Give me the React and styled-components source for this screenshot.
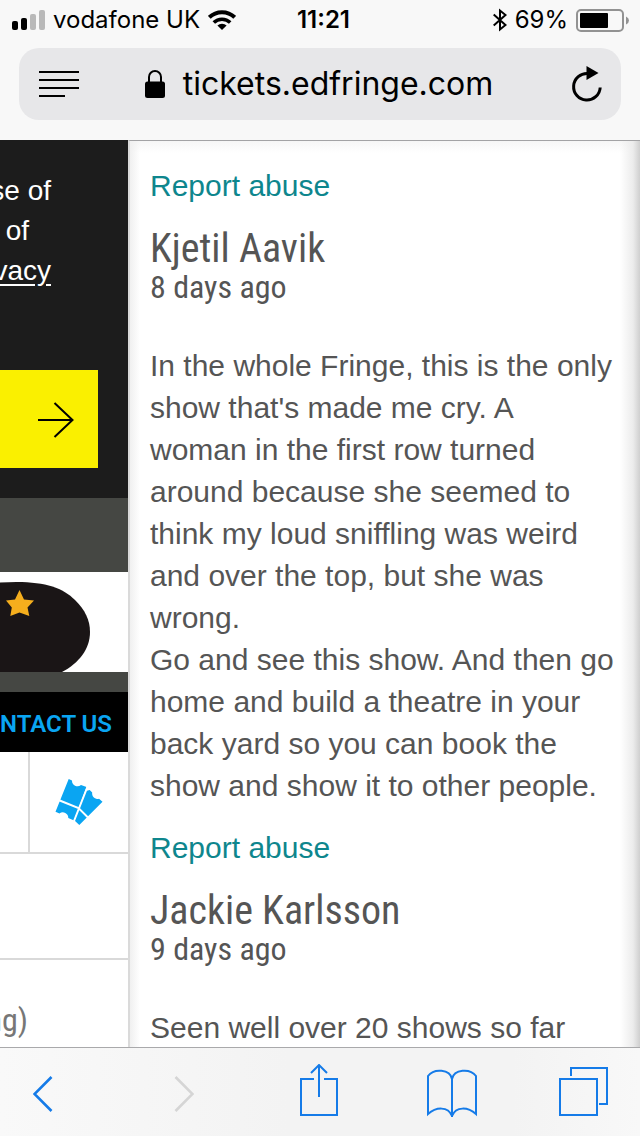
import React from "react";
import styled, { createGlobalStyle } from "styled-components";

const GlobalStyle = createGlobalStyle`
  * {
    box-sizing: border-box;
  }
  body {
    margin: 0;
    font-family: "Liberation Sans", Arial, sans-serif;
    background-color: white;
  }
  button {
    border: none;
    padding: 0;
    background: none;
    color: inherit;
    font: inherit;
    cursor: pointer;
  }
  svg {
    display: block;
  }
`;

const Screen = styled.div`
  height: 100vh;
  display: flex;
  flex-direction: column;
  overflow: hidden;
`;

/* browser top bar */
const Header = styled.header`
  background-color: #f8f8f8;
  font-family: Inter, "Liberation Sans", sans-serif;
  color: black;
`;
const StatusBar = styled.div`
  display: grid;
  grid-template-columns: 1fr auto 1fr;
  align-items: center;
  height: 40px;
  padding: 0 11px 0 12px;
  font-size: 24px;
  line-height: 40px;
`;
const StatusGroup = styled.div`
  display: flex;
  align-items: center;
  justify-content: ${(props) => (props.$end ? "flex-end" : "flex-start")};
  gap: 8px;
  white-space: nowrap;
`;
const Battery = styled.div`
  display: flex;
  align-items: center;
  gap: 8px;
`;
const Time = styled.time`
  padding-left: 6px;
  font-weight: 600;
`;
const AddressBar = styled.div`
  display: flex;
  align-items: center;
  justify-content: space-between;
  height: 72px;
  margin: 8px 19px 20px;
  padding: 0 18px 0 20px;
  border-radius: 20px;
  background-color: #e7e7e9;
`;
const Address = styled.button`
  display: flex;
  align-items: center;
  gap: 18px;
  padding-right: 12px;
  font-size: 32px;
  line-height: 40px;
`;

/* page */
const Page = styled.main`
  flex: 1;
  min-height: 0;
  display: flex;
  overflow: hidden;
`;
const Sidebar = styled.aside`
  flex: 0 0 20%;
  overflow: hidden;
  background-color: white;
`;
const Notice = styled.div`
  padding: 31px 0 30px;
  background-color: #1c1c1c;
  color: white;
  font-size: 28px;
  line-height: 40px;
`;
const NoticeText = styled.p`
  display: flex;
  flex-direction: column;
  align-items: flex-end;
  width: 51px;
  margin: 0 0 79px;
  white-space: nowrap;
`;
const NoticeLine = styled.span`
  padding-right: ${(props) => (props.$short ? "22px" : "0")};
`;
const NoticeLink = styled.a`
  color: white;
  text-underline-offset: 4px;
`;
const NextButton = styled.button`
  display: flex;
  align-items: center;
  justify-content: flex-end;
  width: 98px;
  height: 98px;
  padding-right: 24px;
  background-color: #faf000;
`;
const Sponsor = styled.div`
  padding: 74px 0 20px;
  background-color: #454743;
`;
const SponsorLogo = styled.div`
  height: 100px;
  background-color: white;
`;
const ContactBar = styled.nav`
  display: flex;
  justify-content: flex-end;
  height: 60px;
  padding-right: 16px;
  background-color: black;
  font-family: Roboto, sans-serif;
  font-size: 24px;
  font-weight: 600;
  line-height: 64px;
  white-space: nowrap;
`;
const ContactLink = styled.a`
  color: #0aa5f2;
  text-decoration: none;
`;
const IconRow = styled.div`
  display: flex;
  height: 102px;
  border-bottom: 2px solid #d9d9d9;
`;
const IconCell = styled.div`
  flex: ${(props) => (props.$grow ? "1" : "0 0 30px")};
  display: flex;
  align-items: center;
  justify-content: center;
  border-right: ${(props) => (props.$grow ? "none" : "2px solid #d9d9d9")};
`;
const EmptyRow = styled.div`
  height: 106px;
  border-bottom: 2px solid #d9d9d9;
`;
const SideRow = styled.div`
  display: flex;
  justify-content: flex-end;
  width: 28px;
  font-family: "Roboto Condensed", "Liberation Sans Narrow", sans-serif;
  font-size: 32px;
  line-height: 120px;
  color: #777;
`;

/* reviews */
const Reviews = styled.section`
  flex: 1;
  min-width: 0;
  padding: 24px 25px 0 20px;
  border-top: 1px solid #a3a3a5;
  border-left: 2px solid #dadada;
  background: linear-gradient(to right, #f0f0f0, rgba(255, 255, 255, 0) 10px),
    linear-gradient(to left, #cfcfcf, #ececec 7px, rgba(255, 255, 255, 0) 20px),
    linear-gradient(#f6f6f6, white 12px);
  color: #555;
`;
const ReportLink = styled.a`
  display: block;
  margin-bottom: 22px;
  color: #0e868d;
  font-size: 30px;
  line-height: 42px;
  text-decoration: none;
`;
const Author = styled.h3`
  margin: 0;
  font-family: "Roboto Condensed", "Liberation Sans Narrow", sans-serif;
  font-size: 40px;
  font-weight: 400;
  line-height: 40px;
`;
const Posted = styled.p`
  margin: 0 0 40px;
  font-family: "Roboto Condensed", "Liberation Sans Narrow", sans-serif;
  font-size: 32px;
  line-height: 36px;
`;
const ReviewText = styled.p`
  margin: 0 0 20px;
  font-size: 30px;
  line-height: 42px;
`;

/* browser bottom bar */
const Toolbar = styled.nav`
  display: grid;
  grid-template-columns: 141fr 126fr 127fr 132fr auto;
  align-items: center;
  justify-items: start;
  height: 89px;
  padding: 0 31px 0 33px;
  border-top: 1px solid #a9a9ab;
  background: linear-gradient(to right, #f9f9f9, #f3f3f3 45%, #f3f3f3 80%, #f8f8f8);
`;
const ToolButton = styled.button`
  color: ${(props) => (props.disabled ? "#d5d5d5" : "#157be8")};
`;

const SignalIcon = () => (
  <svg width="33" height="20" viewBox="0 0 33 20">
    <rect x="0" y="11" width="6" height="9" rx="2" />
    <rect x="9" y="8" width="6" height="12" rx="2" />
    <rect x="18" y="4" width="6" height="16" rx="2" fill="#b9b9b9" />
    <rect x="27" y="0" width="6" height="20" rx="2" fill="#b9b9b9" />
  </svg>
);

const WifiIcon = () => (
  <svg width="28" height="20" viewBox="0 0 28 20" fill="none" stroke="black" strokeWidth="4">
    <path d="M1.300 7.400a18 18 0 0 1 25.400 0" />
    <path d="M5.800 12.600a11.600 11.600 0 0 1 16.400 0" strokeWidth="3.500" />
    <path d="M14 20l-4.600-4.400a6.600 6.600 0 0 1 9.200 0z" fill="black" stroke="none" />
  </svg>
);

const BluetoothIcon = () => (
  <svg width="14" height="24" viewBox="0 0 14 24" fill="none" stroke="black" strokeWidth="2">
    <path d="M.7 6.500L12.500 17 7 21.500v-19L12.500 7 .7 17.500" />
  </svg>
);

const BatteryIcon = () => (
  <svg width="53" height="24" viewBox="0 0 53 24">
    <rect x="1" y="2" width="46" height="21" rx="4" fill="none" stroke="#929292" strokeWidth="2" />
    <rect x="4" y="5" width="28" height="15" rx="1" />
    <path d="M50 8.500q3 1.500 3 4t-3 4z" fill="#929292" />
  </svg>
);

const ReaderIcon = () => (
  <svg width="40" height="28" viewBox="0 0 40 28">
    <path d="M0 2h40M0 10h40M0 18h40M0 26h26" stroke="black" strokeWidth="2" />
  </svg>
);

const LockIcon = () => (
  <svg width="20" height="28" viewBox="0 0 20 28">
    <path d="M4 13V7a6 6 0 0 1 12 0v6" fill="none" stroke="black" strokeWidth="2" />
    <rect x="0" y="11.500" width="20" height="16.500" rx="2.500" />
  </svg>
);

const ReloadIcon = () => (
  <svg width="32" height="36" viewBox="0 0 32 36">
    <path d="M17 7.500A13.300 13.300 0 1 0 29.200 21.500" fill="none" stroke="black" strokeWidth="3" />
    <path d="M15.500 0v14L27.500 7z" />
  </svg>
);

const ArrowIcon = () => (
  <svg width="36" height="38" viewBox="0 0 36 38" fill="none" stroke="black" strokeWidth="2">
    <path d="M0 20h34M16.500 3L34.500 20 16.500 37" />
  </svg>
);

const LogoMark = () => (
  <svg width="128" height="100" viewBox="0 0 128 100">
    <path
      d="M0 10.500C40 8 61 14 75 28 85 38 90 48 90 60 90 77 79 91 62 100H0z"
      fill="#1a1516"
    />
    <path
      d="M19.500 18L24 27.500l10 1-6.500 7 1.800 8.500-9.800-3.500-9.200 3.500 1.500-8.500-5.800-7 9-1z"
      fill="#f5ae1d"
    />
  </svg>
);

const TicketsIcon = () => (
  <svg width="48" height="46" viewBox="0 0 48 46">
    <path
      d="M13.700 0l3.300 1.500A5.500 5.500 0 0 0 26 6l5.500 2L19 41.500 13.300 39A5.500 5.500 0 0 0 4.500 34.500L.5 32.800z"
      fill="#0aa5f2"
    />
    <path
      d="M34.700 11l2.500 2.500A5.500 5.500 0 0 0 44 19.800l3.500 3L24.300 46 19.500 41.500 31 12z"
      fill="#0aa5f2"
    />
    <path d="M33 6.500L19 42M3.500 21L23.500 29 33 38.500" fill="none" stroke="white" strokeWidth="2" />
  </svg>
);

const ChevronIcon = ({ flip }) => (
  <svg width="20" height="40" viewBox="0 0 20 40" fill="none" stroke="currentColor" strokeWidth="2.600">
    <path d={flip ? "M1.500 5L18.500 22 1.500 39" : "M18.500 5L1.500 22l17 17"} />
  </svg>
);

const ShareIcon = () => (
  <svg width="39" height="56" viewBox="0 0 39 56" fill="none" stroke="currentColor" strokeWidth="2">
    <path d="M14 15H1v36h36V15H24M19 33V1M11 9l8-8 8 8" />
  </svg>
);

const BookIcon = () => (
  <svg width="50" height="50" viewBox="0 0 50 50" fill="none" stroke="currentColor" strokeWidth="2">
    <path d="M25 50V12C23 2 7 1 1 9v38c8-7 20-8 24 2C29 39 41 40 49 47V9C43 1 27 2 25 12" />
  </svg>
);

const TabsIcon = () => (
  <svg width="50" height="50" viewBox="0 0 50 50" fill="none" stroke="currentColor" strokeWidth="2">
    <path d="M1 12h37v36H1zM12 9V1h36v36h-8" />
  </svg>
);

const reviews = [
  {
    author: "Kjetil Aavik",
    posted: "8 days ago",
    text: [
      "In the whole Fringe, this is the only show that's made me cry. A woman in the first row turned around because she seemed to think my loud sniffling was weird and over the top, but she was wrong.",
      "Go and see this show. And then go home and build a theatre in your back yard so you can book the show and show it to other people.",
    ],
  },
  {
    author: "Jackie Karlsson",
    posted: "9 days ago",
    text: ["Seen well over 20 shows so far"],
  },
];

const Review = ({ review }) => (
  <article>
    <ReportLink href="#report">Report abuse</ReportLink>
    <Author>{review.author}</Author>
    <Posted>{review.posted}</Posted>
    <ReviewText>
      {review.text.map((part, i) => (
        <React.Fragment key={part}>
          {i > 0 && <br />}
          {part}
        </React.Fragment>
      ))}
    </ReviewText>
  </article>
);

const App = () => {
  return (
    <Screen>
      <GlobalStyle />
      <Header>
        <StatusBar>
          <StatusGroup>
            <SignalIcon />
            <span>vodafone UK</span>
            <WifiIcon />
          </StatusGroup>
          <Time>11:21</Time>
          <StatusGroup $end>
            <BluetoothIcon />
            <Battery>
              <span>69%</span>
              <BatteryIcon />
            </Battery>
          </StatusGroup>
        </StatusBar>
        <AddressBar>
          <button aria-label="Reader view">
            <ReaderIcon />
          </button>
          <Address>
            <LockIcon />
            tickets.edfringe.com
          </Address>
          <button aria-label="Reload">
            <ReloadIcon />
          </button>
        </AddressBar>
      </Header>
      <Page>
        <Sidebar>
          <Notice>
            <NoticeText>
              <NoticeLine>se of</NoticeLine>
              <NoticeLine $short>of</NoticeLine>
              <NoticeLink href="#privacy">vacy</NoticeLink>
            </NoticeText>
            <NextButton aria-label="Next">
              <ArrowIcon />
            </NextButton>
          </Notice>
          <Sponsor>
            <SponsorLogo>
              <LogoMark />
            </SponsorLogo>
          </Sponsor>
          <ContactBar>
            <ContactLink href="#contact">NTACT US</ContactLink>
          </ContactBar>
          <IconRow>
            <IconCell />
            <IconCell $grow>
              <button aria-label="Tickets">
                <TicketsIcon />
              </button>
            </IconCell>
          </IconRow>
          <EmptyRow />
          <SideRow>ng)</SideRow>
        </Sidebar>
        <Reviews>
          {reviews.map((review) => (
            <Review key={review.author} review={review} />
          ))}
        </Reviews>
      </Page>
      <Toolbar>
        <ToolButton aria-label="Back">
          <ChevronIcon />
        </ToolButton>
        <ToolButton aria-label="Forward" disabled>
          <ChevronIcon flip />
        </ToolButton>
        <ToolButton aria-label="Share">
          <ShareIcon />
        </ToolButton>
        <ToolButton aria-label="Bookmarks">
          <BookIcon />
        </ToolButton>
        <ToolButton aria-label="Tabs">
          <TabsIcon />
        </ToolButton>
      </Toolbar>
    </Screen>
  );
};

export default App;
